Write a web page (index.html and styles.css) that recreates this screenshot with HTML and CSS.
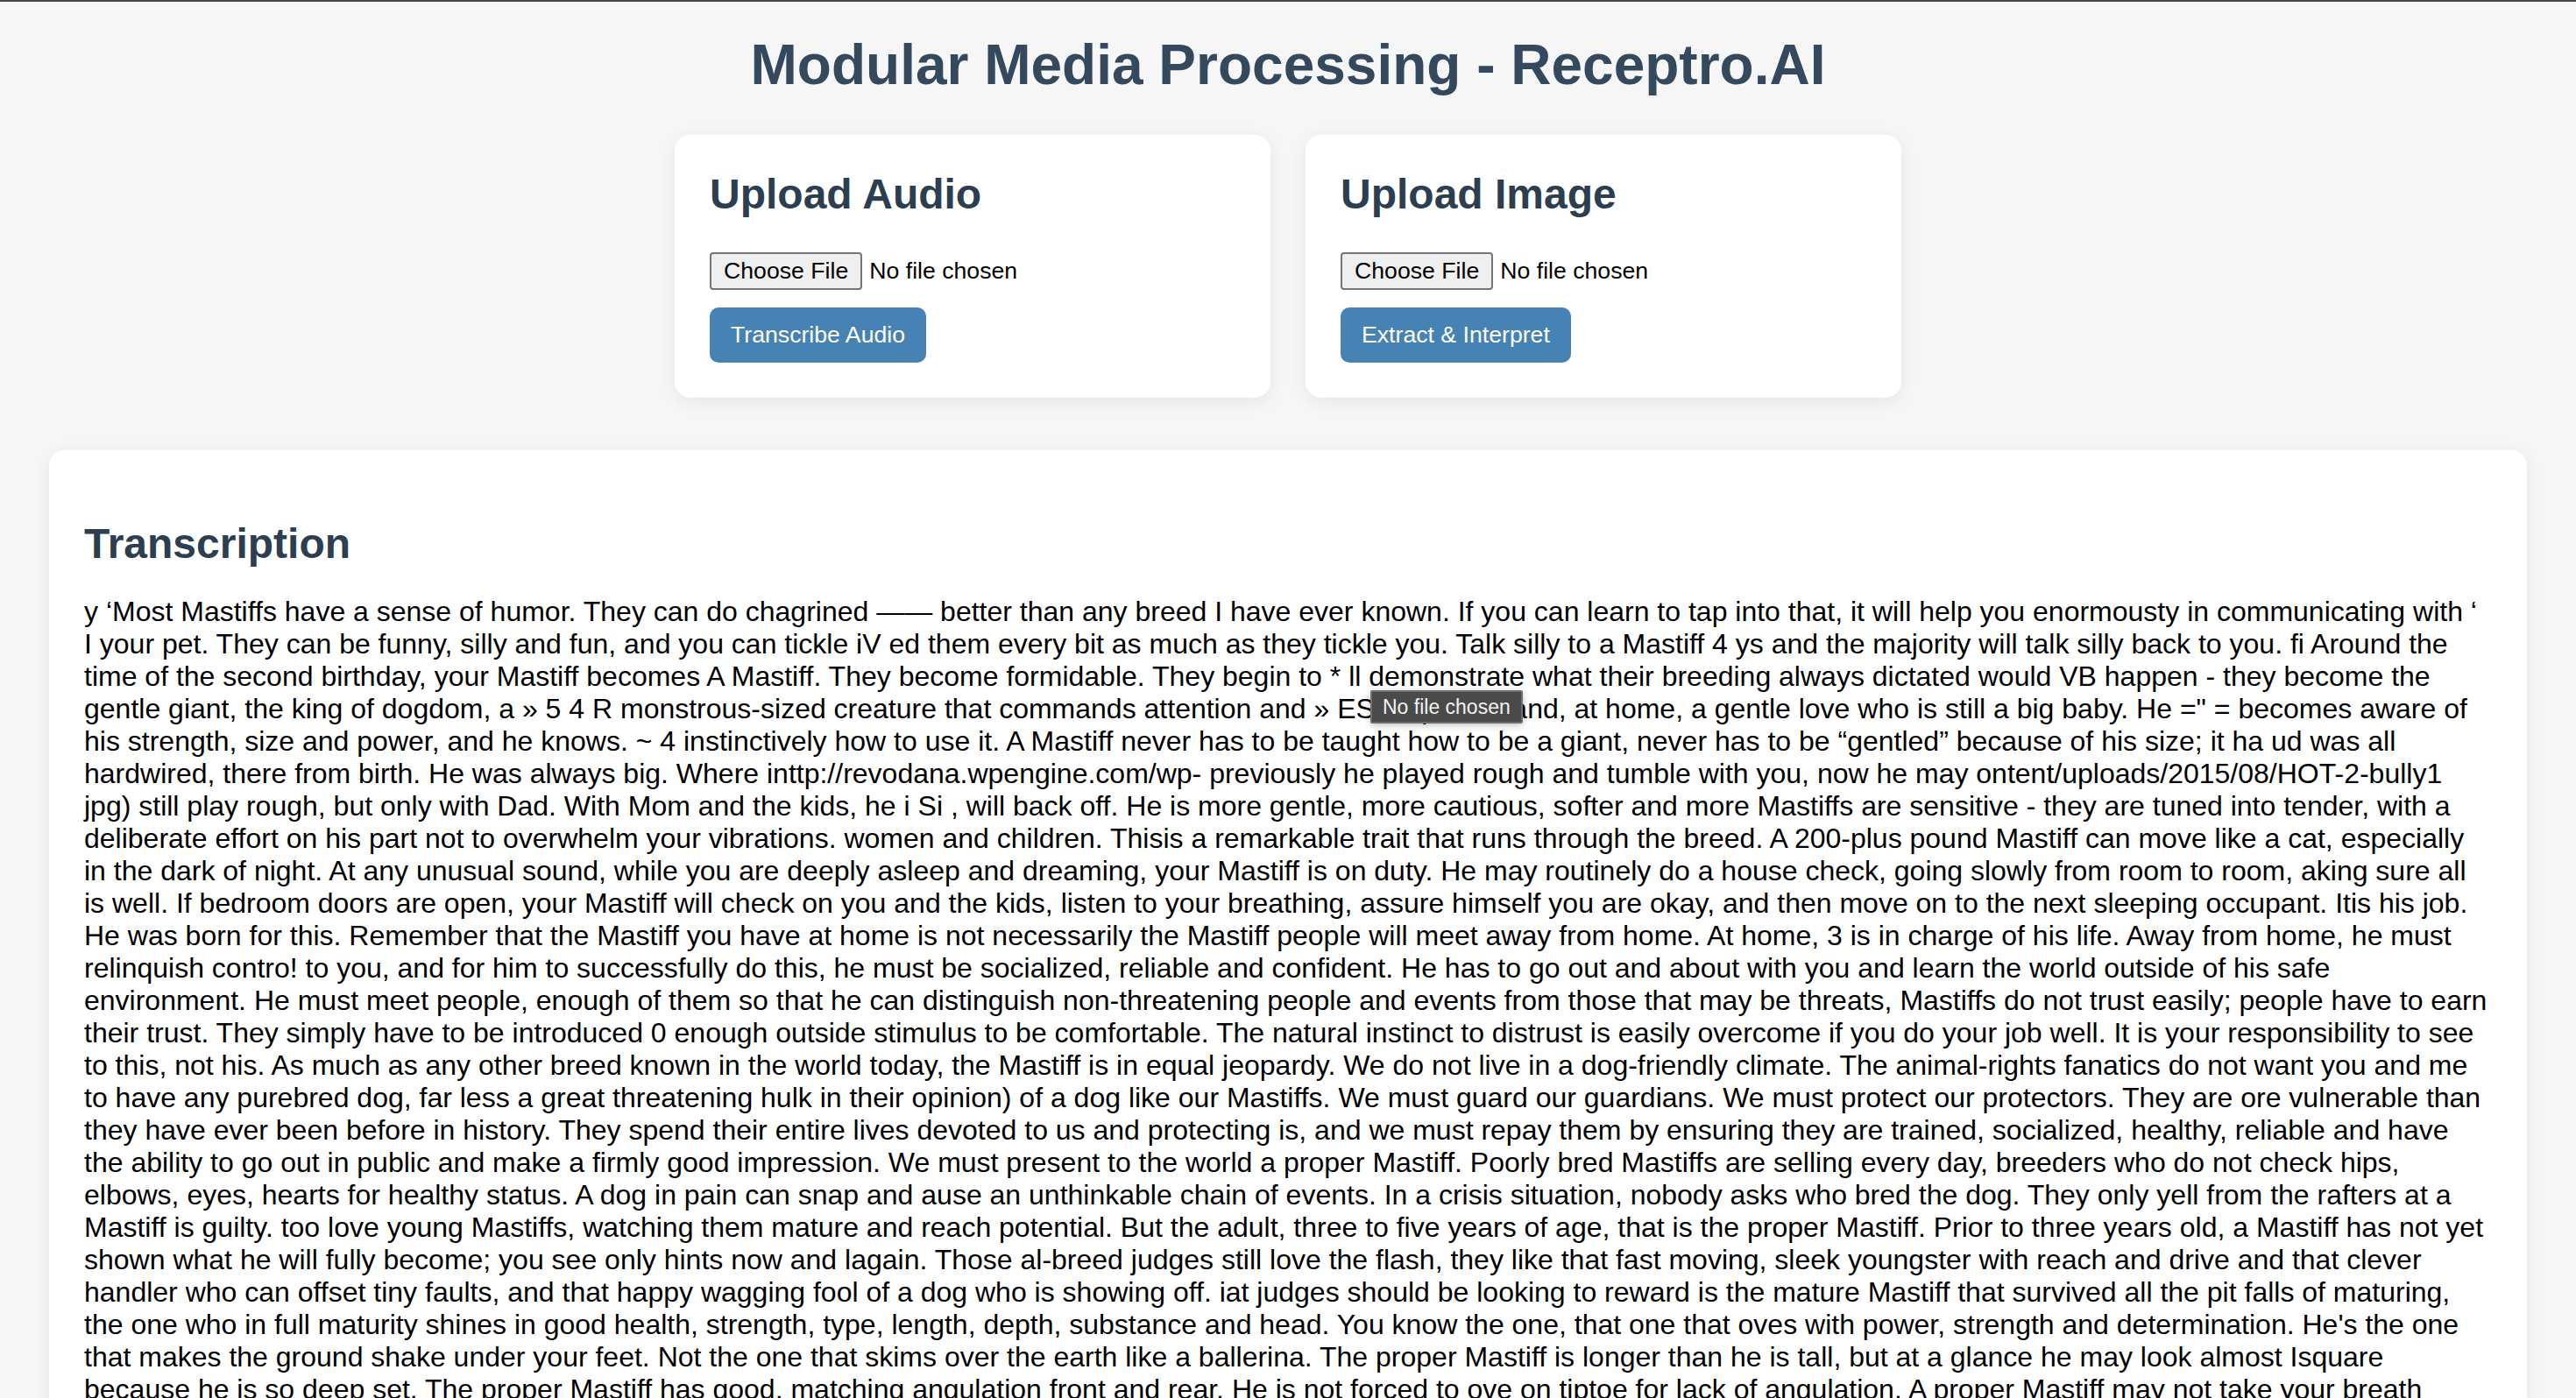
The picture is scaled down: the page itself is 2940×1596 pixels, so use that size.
FILE: index.html
```html
<!DOCTYPE html>
<html lang="en">
<head>
<meta charset="utf-8">
<title>Modular Media Processing - Receptro.AI</title>
<link rel="stylesheet" href="styles.css">
</head>
<body>
<div class="page">
  <h1 class="title">Modular Media Processing - Receptro.AI</h1>
  <div class="uploads">
    <section class="card">
      <h2 class="card-title">Upload Audio</h2>
      <div class="file-row"><input class="file-input" type="file" accept="audio/*"></div>
      <button class="action-btn" type="button">Transcribe Audio</button>
    </section>
    <section class="card">
      <h2 class="card-title">Upload Image</h2>
      <div class="file-row"><input class="file-input" type="file" accept="image/*"></div>
      <button class="action-btn" type="button">Extract &amp; Interpret</button>
    </section>
  </div>
  <section class="result">
    <h2 class="result-title">Transcription</h2>
    <div class="result-text">y ‘Most Mastiffs have a sense of humor. They can do chagrined —— better than any breed I have ever known. If you can learn to tap into that, it will help you enormousty in communicating with ‘ I your pet. They can be funny, silly and fun, and you can tickle iV ed them every bit as much as they tickle you. Talk silly to a Mastiff 4 ys and the majority will talk silly back to you. fi Around the time of the second birthday, your Mastiff becomes A Mastiff. They become formidable. They begin to * ll demonstrate what their breeding always dictated would VB happen - they become the gentle giant, the king of dogdom, a » 5 4 R monstrous-sized creature that commands attention and » ES respect, stand, at home, a gentle love who is still a big baby. He =" = becomes aware of his strength, size and power, and he knows. ~ 4 instinctively how to use it. A Mastiff never has to be taught how to be a giant, never has to be “gentled” because of his size; it ha ud was all hardwired, there from birth. He was always big. Where inttp://revodana.wpengine.com/wp- previously he played rough and tumble with you, now he may ontent/uploads/2015/08/HOT-2-bully1 jpg) still play rough, but only with Dad. With Mom and the kids, he i Si , will back off. He is more gentle, more cautious, softer and more Mastiffs are sensitive - they are tuned into tender, with a deliberate effort on his part not to overwhelm your vibrations. women and children. Thisis a remarkable trait that runs through the breed. A 200-plus pound Mastiff can move like a cat, especially in the dark of night. At any unusual sound, while you are deeply asleep and dreaming, your Mastiff is on duty. He may routinely do a house check, going slowly from room to room, aking sure all is well. If bedroom doors are open, your Mastiff will check on you and the kids, listen to your breathing, assure himself you are okay, and then move on to the next sleeping occupant. Itis his job. He was born for this. Remember that the Mastiff you have at home is not necessarily the Mastiff people will meet away from home. At home, 3 is in charge of his life. Away from home, he must relinquish contro! to you, and for him to successfully do this, he must be socialized, reliable and confident. He has to go out and about with you and learn the world outside of his safe environment. He must meet people, enough of them so that he can distinguish non-threatening people and events from those that may be threats, Mastiffs do not trust easily; people have to earn their trust. They simply have to be introduced 0 enough outside stimulus to be comfortable. The natural instinct to distrust is easily overcome if you do your job well. It is your responsibility to see to this, not his. As much as any other breed known in the world today, the Mastiff is in equal jeopardy. We do not live in a dog-friendly climate. The animal-rights fanatics do not want you and me to have any purebred dog, far less a great threatening hulk in their opinion) of a dog like our Mastiffs. We must guard our guardians. We must protect our protectors. They are ore vulnerable than they have ever been before in history. They spend their entire lives devoted to us and protecting is, and we must repay them by ensuring they are trained, socialized, healthy, reliable and have the ability to go out in public and make a firmly good impression. We must present to the world a proper Mastiff. Poorly bred Mastiffs are selling every day, breeders who do not check hips, elbows, eyes, hearts for healthy status. A dog in pain can snap and ause an unthinkable chain of events. In a crisis situation, nobody asks who bred the dog. They only yell from the rafters at a Mastiff is guilty. too love young Mastiffs, watching them mature and reach potential. But the adult, three to five years of age, that is the proper Mastiff. Prior to three years old, a Mastiff has not yet shown what he will fully become; you see only hints now and lagain. Those al-breed judges still love the flash, they like that fast moving, sleek youngster with reach and drive and that clever handler who can offset tiny faults, and that happy wagging fool of a dog who is showing off. iat judges should be looking to reward is the mature Mastiff that survived all the pit falls of maturing, the one who in full maturity shines in good health, strength, type, length, depth, substance and head. You know the one, that one that oves with power, strength and determination. He's the one that makes the ground shake under your feet. Not the one that skims over the earth like a ballerina. The proper Mastiff is longer than he is tall, but at a glance he may look almost Isquare because he is so deep set. The proper Mastiff has good, matching angulation front and rear. He is not forced to ove on tiptoe for lack of angulation. A proper Mastiff may not take your breath away at first glance.</div>
  </section>
</div>
<div class="tooltip">No file chosen</div>
</body>
</html>
```
FILE: styles.css
```css
html {
  background: #f6f6f6;
}

body {
  margin: 0;
  border-top: 2px solid #454545;
  background: #f6f6f6;
  font-family: "Liberation Sans", Arial, Helvetica, sans-serif;
  color: #000;
}

.page {
  padding: 0 56px;
}

.title {
  margin: 35px 0 43px;
  font-size: 64px;
  font-weight: 700;
  text-align: center;
  color: #34495e;
}

.uploads {
  display: flex;
  justify-content: center;
  gap: 40px;
}

.card {
  width: 680px;
  box-sizing: border-box;
  padding: 40px 40px 40px;
  background: #fff;
  border-radius: 18px;
  box-shadow: 0 4px 20px rgba(0, 0, 0, 0.07);
}

.card-title {
  margin: 0 0 39px;
  font-size: 48px;
  font-weight: 700;
  color: #2c3e50;
}

.file-row {
  display: flex;
  align-items: center;
  margin-bottom: 20px;
}

.file-input {
  font-family: "Liberation Sans", Arial, Helvetica, sans-serif;
  font-size: 26.67px;
  color: #000;
}

.file-input::file-selector-button {
  font: inherit;
  margin: 0 8px 0 0;
  padding: 4px 14px;
  border: 2px solid #767676;
  border-radius: 4px;
  background: #efefef;
  color: #000;
}

.action-btn {
  display: block;
  padding: 16px 24px;
  border: none;
  border-radius: 10px;
  background: #4682b4;
  color: #fff;
  font-family: "Liberation Sans", Arial, Helvetica, sans-serif;
  font-size: 26.67px;
}

.result {
  margin-top: 60px;
  padding: 0 40px 40px;
  background: #fff;
  border-radius: 18px;
  box-shadow: 0 4px 20px rgba(0, 0, 0, 0.07);
  display: flow-root;
}

.result-title {
  margin: 79px 0 32px;
  font-size: 48px;
  font-weight: 700;
  color: #2c3e50;
}

.result-text {
  font-size: 32px;
}

.tooltip {
  position: absolute;
  left: 1564px;
  top: 788px;
  width: 174px;
  height: 38px;
  box-sizing: border-box;
  padding-left: 12px;
  background: #4a4a4a;
  border: 2px solid #6e6e6e;
  border-radius: 2px;
  color: #f2f2f2;
  font-family: "Liberation Sans", Arial, Helvetica, sans-serif;
  font-size: 23px;
  line-height: 34px;
  box-shadow: 0 2px 8px rgba(0, 0, 0, 0.25);
  white-space: nowrap;
}
```
